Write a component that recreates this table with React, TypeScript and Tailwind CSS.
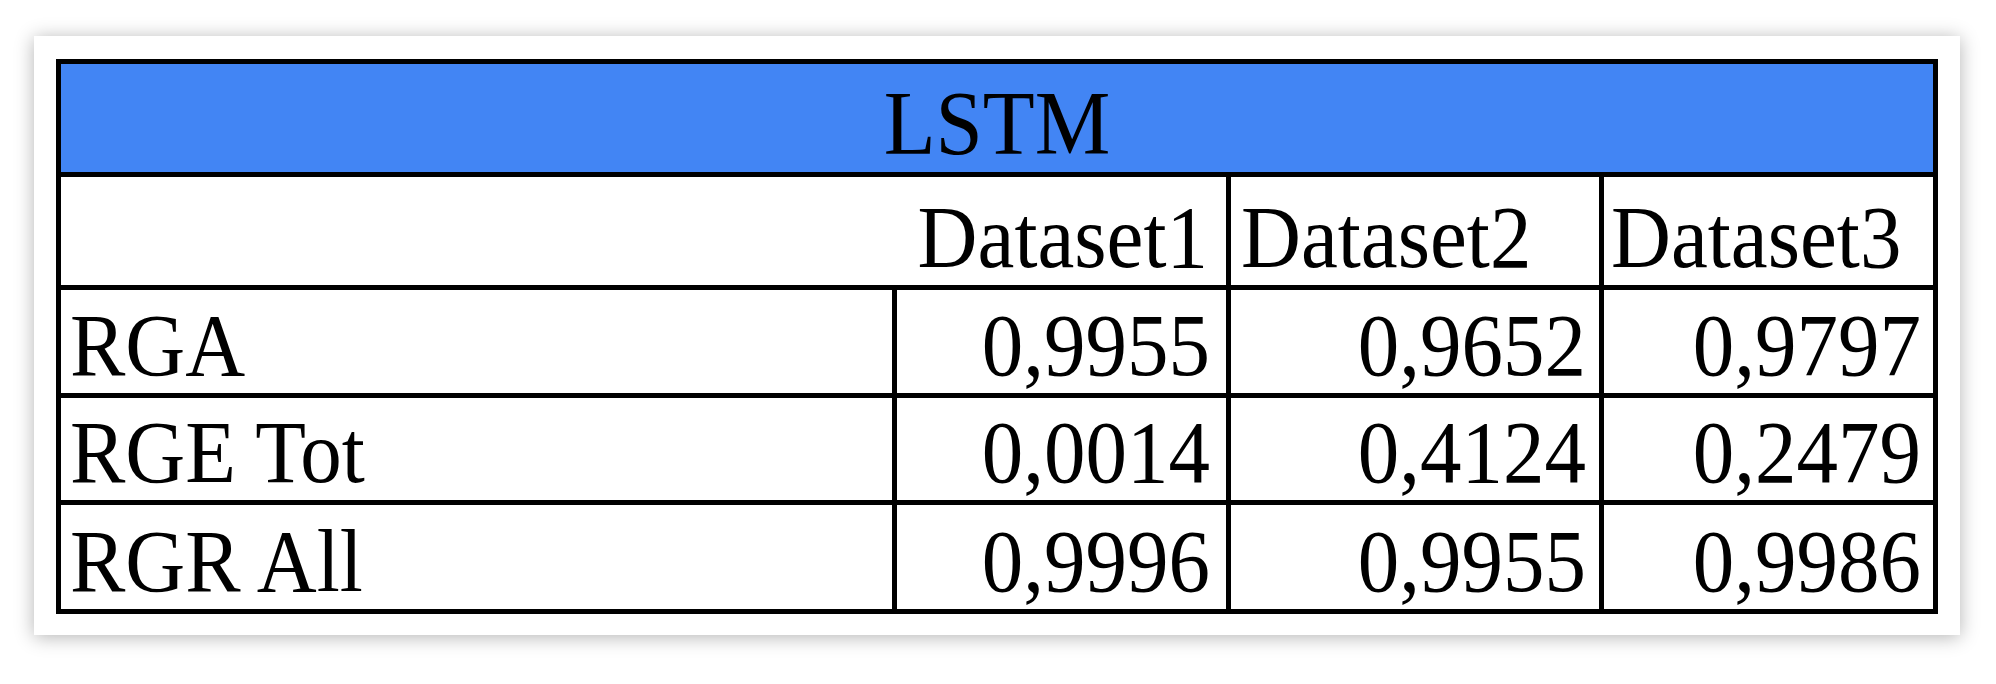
const rows = [
  { label: "RGA", values: ["0,9955", "0,9652", "0,9797"] },
  { label: "RGE Tot", values: ["0,0014", "0,4124", "0,2479"] },
  { label: "RGR All", values: ["0,9996", "0,9955", "0,9986"] },
];

// right padding per value column, to line up with the header text
const valuePad = ["pr-[16px]", "pr-[13px]", "pr-[12px]"];

const cell = "bg-white flex items-end leading-none pb-[3px]";

// glyphs in the screenshot are a bit taller than Liberation Serif's
const Txt = ({ children }: { children: React.ReactNode }) => (
  <span className="inline-block origin-bottom scale-y-[1.06] whitespace-pre">{children}</span>
);

const App = () => {
  return (
    <div className="min-h-[684px] w-[1996px] bg-white pl-[34px] pt-[36px]">
      {/* Card */}
      <div className="w-[1926px] bg-white pt-[23px] pb-[21px] px-[22px] shadow-[0_2px_18px_rgba(0,0,0,0.3)]">
        <div
          className="grid grid-cols-[831px_329px_368px_329px] grid-rows-[108px_108px_103px_102px_104px] gap-[5px] p-[5px] bg-black text-black text-[83px]"
          style={{ fontFamily: '"Liberation Serif", "Times New Roman", serif' }}
        >
          {/* Title */}
          <div className="col-span-4 bg-[#4285f4] flex items-end justify-center leading-none pb-[3px] text-[85px]">
            <Txt>LSTM</Txt>
          </div>

          {/* Dataset headers */}
          <div className={`${cell} col-span-2 justify-end pr-[18px]`}>
            <Txt>Dataset1</Txt>
          </div>
          <div className={`${cell} pl-[10px]`}>
            <Txt>Dataset2</Txt>
          </div>
          <div className={`${cell} pl-[7px]`}>
            <Txt>Dataset3</Txt>
          </div>

          {/* Metric rows */}
          {rows.map((r) => (
            <div key={r.label} className="contents">
              <div className={`${cell} pl-[9px]`}>
                <Txt>{r.label}</Txt>
              </div>
              {r.values.map((v, i) => (
                <div key={i} className={`${cell} justify-end ${valuePad[i]}`}>
                  <Txt>{v}</Txt>
                </div>
              ))}
            </div>
          ))}
        </div>
      </div>
    </div>
  );
};

export default App;
